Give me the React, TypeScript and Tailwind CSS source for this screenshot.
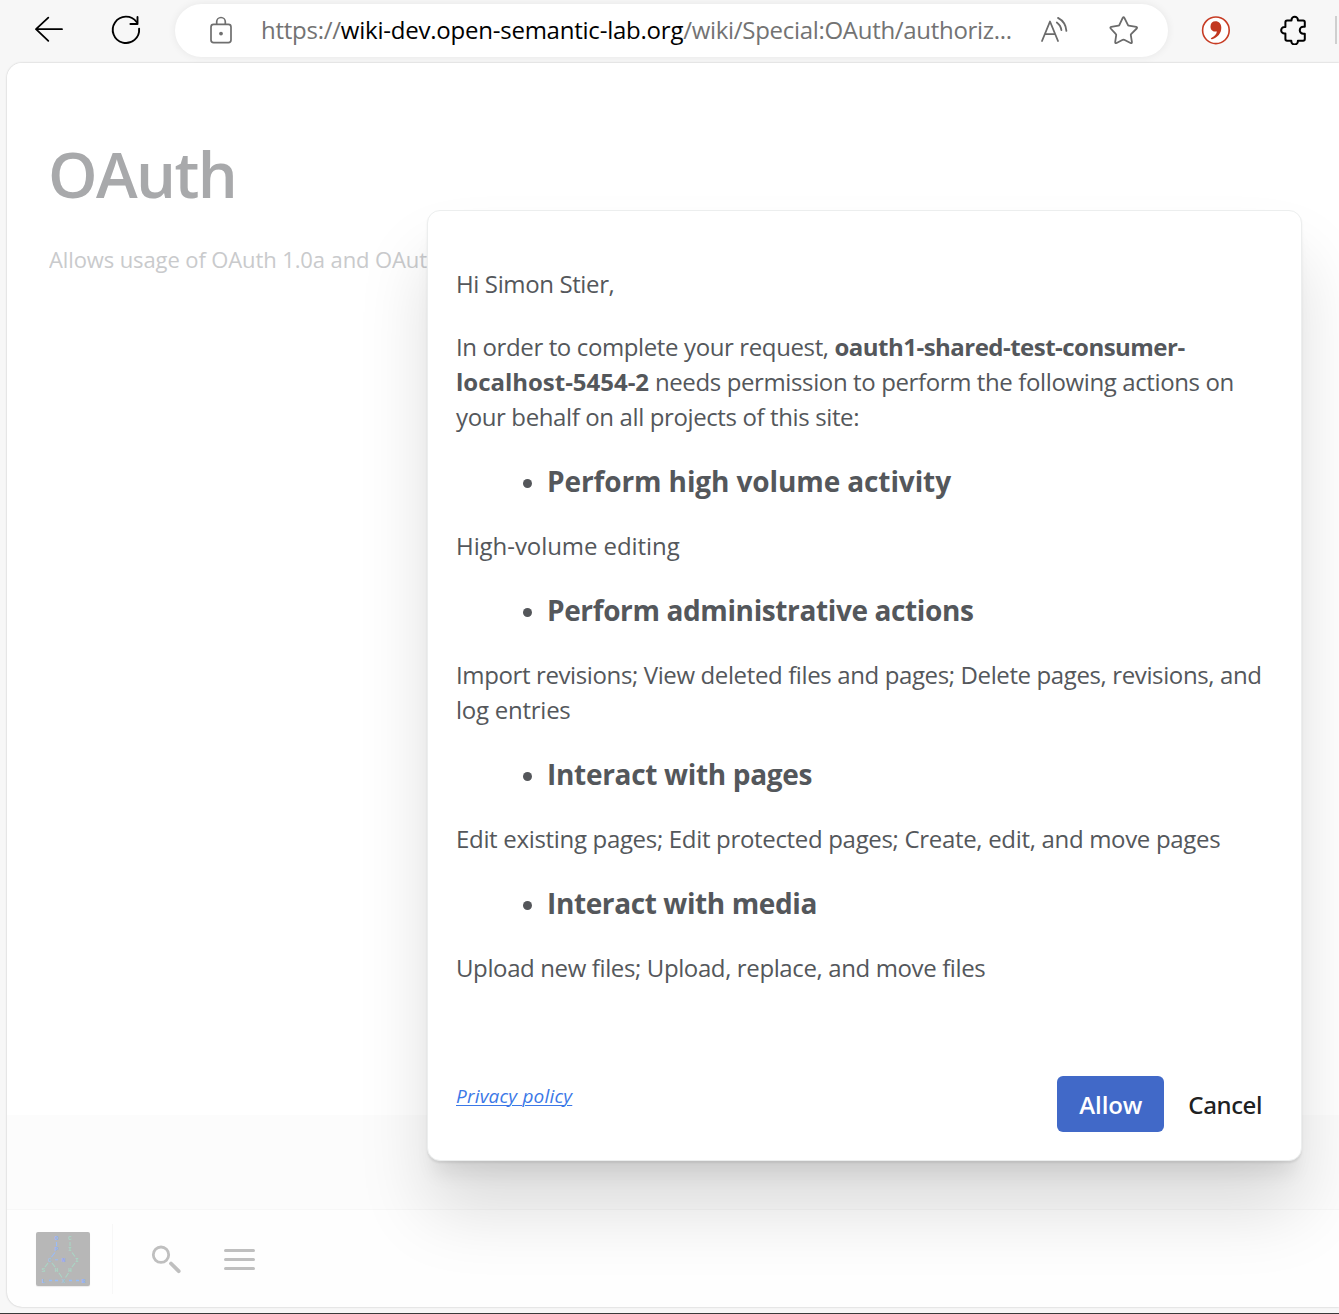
import type { ReactNode } from "react";

function BackIcon() {
  return (
    <svg className="ml-[34px] h-7 w-[30px] shrink-0" viewBox="34 16 30 28" fill="none" stroke="#000" strokeWidth="1.8" strokeLinecap="round" strokeLinejoin="round">
      <path d="M62 29.2H36M48.3 17.7L36 29.2l12.3 11.7" />
    </svg>
  );
}

function ReloadIcon() {
  return (
    <svg className="ml-[46px] h-8 w-8 shrink-0" viewBox="110 14 32 32" fill="none" stroke="#000" strokeWidth="1.9" strokeLinecap="round" strokeLinejoin="round">
      <path d="M139.1 28.6A13.2 13.2 0 1 1 136.6 22" />
      <path d="M137.5 17v7H130.4" />
    </svg>
  );
}

function LockIcon() {
  return (
    <svg className="ml-[34px] h-7 w-6 shrink-0" viewBox="209 15 24 28" fill="none" stroke="#6f6f6f" strokeWidth="1.7">
      <rect x="211" y="23.4" width="20" height="18.2" rx="2.6" />
      <path d="M216.7 23.4V20.800a4.3 4.3 0 0 1 8.6 0V23.4" />
      <circle cx="221" cy="32.6" r="1.9" fill="#6f6f6f" stroke="none" />
    </svg>
  );
}

function ReadAloudIcon() {
  return (
    <svg className="h-7 w-[29px] shrink-0" viewBox="1040 15 29 28" fill="none" stroke="#6b6b6b" strokeWidth="1.8" strokeLinecap="round" strokeLinejoin="round">
      <path d="M1042 40l8-19.5 8 19.5M1045 33.2h10.2" />
      <path d="M1056.800 21.5a11.5 11.5 0 0 1 4.6 7.7M1058 16.900a16 16 0 0 1 8.4 13" />
    </svg>
  );
}

function StarIcon() {
  return (
    <svg className="ml-10 h-[30px] w-[30px] shrink-0" viewBox="1109 15 30 30" fill="none" stroke="#6b6b6b" strokeWidth="1.8" strokeLinejoin="round">
      <path d="M1122.7 17.900q.9-1.3 1.7 0l3.6 7.2q.2.5.8.6l7.4 1.2q1.5.4.5 1.6l-5.6 5.600q-.4.4-.3 1l1.1 6.700q.2 1.900-1.400 1.200l-6.300-3.200q-.7-.3-1.400 0l-6.200 3.200q-1.600.7-1.400-1.200l1-6.700q.1-.6-.3-1l-5.200-5.600q-.9-1.200.5-1.600l7.300-1.200q.6-.1.800-.6z" />
    </svg>
  );
}

function CommaIcon() {
  return (
    <svg className="ml-[33px] h-[30px] w-[30px] shrink-0" viewBox="1201 15 30 30">
      <circle cx="1215.9" cy="30.3" r="13.3" fill="#fff" stroke="#c73c24" strokeWidth="1.6" />
      <path fill="#c23820" d="M1215.4 21.300c3.600 0 5.900 2.600 5.900 6.400 0 5.500-3.700 9.800-9.200 11.600-1.500.2-1.700-.9-.5-1.500 3.200-1.700 4.800-3.700 5.300-6.400-4.500.8-6.600-2.100-6.400-5.200.2-3 2.100-4.900 4.900-4.900z" />
    </svg>
  );
}

function PuzzleIcon() {
  return (
    <svg className="ml-[49px] h-[30px] w-7 shrink-0" viewBox="1280.300 15 28 30" fill="none" stroke="#000" strokeWidth="2" strokeLinejoin="round">
      <path d="M1291.8 20.500V19.900a3.2 3.2 0 0 1 6.4 0v.6h5.2q1.7 0 1.7 1.700v4.600h-1.600a3.4 3.4 0 0 0 0 6.900h1.600v5.400q0 1.700-1.700 1.700h-5.200v.5a3.3 3.3 0 0 1-6.600 0v-.5h-4.200q-1.700 0-1.700-1.700v-5.500h-.9a3.3 3.3 0 0 1 0-6.700h.9v-4.700q0-1.700 1.700-1.700z" />
    </svg>
  );
}

const glyphs: [number, number, string, string][] = [
  [20.5, 8, "O", "#8fb4ff"],
  [34, 8, "C", "#a9d8c6"],
  [20.5, 19, "P", "#8fb4ff"],
  [34, 19, "I", "#a9d8c6"],
  [14, 29.5, "C", "#9cc4e4"],
  [27.5, 29.5, "N", "#94a9fa"],
  [41, 29.5, "I", "#a9d8c6"],
  [7.5, 39.5, "S", "#a9d8c6"],
  [20.5, 39.5, "H", "#a9d8c6"],
  [34, 39.5, "H", "#a9d8c6"],
  [7.5, 50.5, "L", "#8fbcff"],
  [27.5, 50.5, "X", "#9cc8dc"],
  [47.5, 50.5, "B", "#8fb4ff"],
];

function SiteLogo() {
  return (
    <svg className="ml-[29px] h-[54px] w-[54px] shrink-0 rounded-[2px] bg-[#b7b7b7] shadow-[0_1px_1px_rgba(0,0,0,0.08)]" viewBox="0 0 54 54">
      <g fontFamily="Liberation Mono" fontSize="6" fontWeight="700" textAnchor="middle">
        {glyphs.map(([x, y, c, fill], i) => (
          <text key={i} x={x} y={y} fill={fill}>{c}</text>
        ))}
      </g>
      <g fill="none" strokeWidth="1.1">
        <path stroke="#98bcfa" d="M20.5 10v4M19 20.5l-3.5 4.5M19 27.800h3" />
        <path stroke="#a9d6c5" d="M34 10v4M36 20.500l3 4M12 31l-3 4M16 31l3 4M39 31l-3 4M23 41l3 4.500M32.500 41l-3 4.500" />
        <path stroke="#93bdfc" strokeWidth="1.4" d="M13 48.500h3M19 48.500h3M33 48.500h3M40 48.500h3" />
      </g>
    </svg>
  );
}

function Text({ children }: { children: ReactNode }) {
  return <p className="leading-[35px]">{children}</p>;
}

function Grant({ children }: { children: ReactNode }) {
  return (
    <div className="flex h-[38px] items-center pl-[66.5px] text-[28px] leading-[38px] font-bold">
      <span className="mt-[4px] mr-[15.5px] size-[9px] rounded-full bg-[#54565a]" />
      {children}
    </div>
  );
}

function Toolbar() {
  return (
    <header className="flex h-[62px] w-full shrink-0 items-center bg-[#f7f7f7] pb-[2px]">
      <BackIcon />
      <ReloadIcon />
      <div className="ml-[33px] flex h-[53px] w-[993px] shrink-0 items-center rounded-full bg-white pb-px shadow-[0_0_8px_rgba(0,0,0,0.07)]">
        <LockIcon />
        <div className="ml-[28px] w-[779px] text-[24px] leading-[34px] tracking-[-0.3px] whitespace-nowrap text-[#737373]">
          <span className="tracking-[-0.25px]">https://</span>
          <span className="tracking-[-0.230px] text-black">wiki-dev.open-semantic-lab.org</span>
          <span>/wiki/Special:OAuth/authoriz...</span>
        </div>
        <ReadAloudIcon />
        <StarIcon />
      </div>
      <CommaIcon />
      <PuzzleIcon />
      <span className="ml-[27px] h-7 w-[2px] shrink-0 bg-[#cfcfcf]" />
    </header>
  );
}

function ConsentDialog() {
  return (
    <section className="absolute top-[210px] left-[427px] flex h-[951px] w-[875px] flex-col rounded-[13px] border border-[#eceeee] bg-white px-7 pt-[55px] text-[24px] tracking-[-0.38px] text-[#54575b] shadow-[0_2px_2px_rgba(0,0,0,0.08),0_20px_20px_-8px_rgba(0,5,15,0.08),0_50px_70px_rgba(0,10,10,0.13)]">
      <div className="flex flex-col gap-7 whitespace-nowrap">
        <Text>Hi Simon Stier,</Text>
        <Text>
          In order to complete your request, <b className="tracking-[-0.52px]">oauth1-shared-test-consumer-</b>
          <br />
          <b className="tracking-[-0.02px]">localhost-5454-2</b> needs permission to perform the following actions on
          <br />
          your behalf on all projects of this site:
        </Text>
        <Grant>
          <span className="tracking-[-0.11px]">Perform high volume activity</span>
        </Grant>
        <Text>
          <span className="tracking-[-0.07px]">High-volume editing</span>
        </Text>
        <Grant>
          <span className="tracking-[-0.38px]">Perform administrative actions</span>
        </Grant>
        <Text>
          Import revisions; View deleted files and pages; Delete pages, revisions, and
          <br />
          <span className="tracking-[-0.25px]">log entries</span>
        </Text>
        <Grant>
          <span className="tracking-[-0.310px]">Interact with pages</span>
        </Grant>
        <Text>
          <span className="tracking-[-0.320px]">Edit existing pages; Edit protected pages; Create, edit, and move pages</span>
        </Text>
        <Grant>
          <span className="tracking-[-0.390px]">Interact with media</span>
        </Grant>
        <Text>Upload new files; Upload, replace, and move files</Text>
      </div>
      <footer className="mt-[91px] flex h-14 items-center">
        <a className="-mt-[17px] text-[19px] leading-7 tracking-[0.2px] text-[#3b78e7] italic underline decoration-1 underline-offset-[2px]" href="#privacy">
          Privacy policy
        </a>
        <button className="ml-auto h-14 w-[107px] rounded-[6px] bg-[#4169c8] pt-px font-semibold tracking-[-0.1px] text-white">Allow</button>
        <button className="mr-[11px] ml-[24px] pt-px font-['Noto_Sans',sans-serif] font-medium tracking-[-0.4px] text-[#202122]">Cancel</button>
      </footer>
    </section>
  );
}

export default function App() {
  return (
    <div className="relative flex h-[1314px] w-[1339px] flex-col overflow-hidden border-b border-[#3a3a3a] bg-[#f7f7f7] font-['Open_Sans',sans-serif]">
      <Toolbar />
      <main className="mt-px ml-[7px] flex h-[1244px] shrink-0 flex-col overflow-hidden rounded-l-[15px] bg-[#fefefe] shadow-[0_0_2px_rgba(0,0,0,0.25)]">
        <div className="h-[1052px] bg-white pt-[66px] pl-[41px]">
          <h1 className="text-[63px] leading-[90px] font-semibold tracking-[-1.6px] text-[#a8a9ab]">OAuth</h1>
          <p className="mt-[25px] ml-px w-[380px] overflow-hidden text-[22px] leading-[30px] tracking-[-0.110px] whitespace-nowrap text-[#c9cacc]">Allows usage of OAuth 1.0a and OAut</p>
        </div>
        <div className="h-[95px] border-b border-[#f7f7f7] bg-[#fcfcfc]" />
        <nav className="flex h-[97px] items-center">
          <SiteLogo />
          <span className="ml-[22px] h-[70px] w-px bg-[#f7f7f7]" />
          <svg className="ml-[37px] size-8" viewBox="150 1243 32 32" fill="none" stroke="#bfbfbf" strokeLinecap="round">
            <circle cx="161" cy="1254.7" r="7.7" strokeWidth="2.8" />
            <path d="M171 1263.500l7.700 7.700" strokeWidth="3.8" />
          </svg>
          <span className="mt-[2px] ml-[42px] flex w-[31px] flex-col gap-[6px]">
            <i className="h-[3px] rounded-sm bg-[#bfbfbf]" />
            <i className="h-[3px] rounded-sm bg-[#bfbfbf]" />
            <i className="h-[3px] rounded-sm bg-[#bfbfbf]" />
          </span>
        </nav>
      </main>
      <ConsentDialog />
    </div>
  );
}
